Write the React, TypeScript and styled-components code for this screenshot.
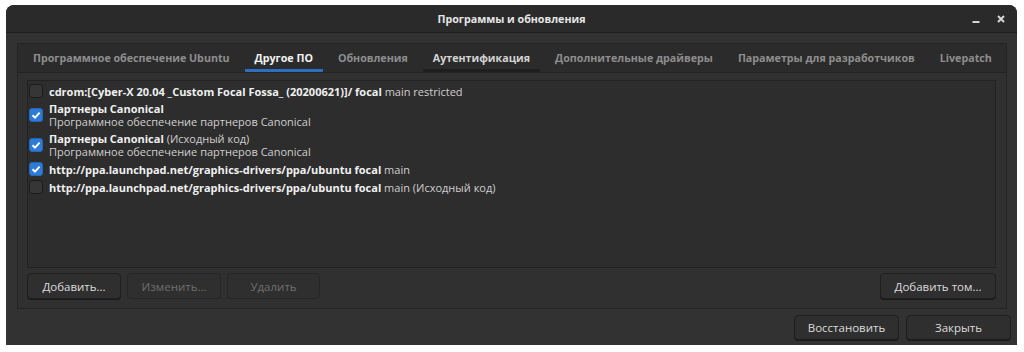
import React from 'react'
import styled, { createGlobalStyle } from 'styled-components'

const GlobalStyle = createGlobalStyle`
  html, body {
    margin: 0;
    padding: 0;
    background: #ffffff;
  }
  body {
    font-family: "Open Sans", "Noto Sans", "DejaVu Sans", sans-serif;
    font-size: 11px;
  }
`

type Source = {
  id: string
  title: string
  extra?: string
  subtitle?: string
  checked: boolean
}

const sources: Source[] = [
  {
    id: 'cdrom',
    title: 'cdrom:[Cyber-X 20.04 _Custom Focal Fossa_ (20200621)]/ focal',
    extra: ' main restricted',
    checked: false,
  },
  {
    id: 'partner',
    title: 'Партнеры Canonical',
    subtitle: 'Программное обеспечение партнеров Canonical',
    checked: true,
  },
  {
    id: 'partner-src',
    title: 'Партнеры Canonical',
    extra: ' (Исходный код)',
    subtitle: 'Программное обеспечение партнеров Canonical',
    checked: true,
  },
  {
    id: 'ppa',
    title: 'http://ppa.launchpad.net/graphics-drivers/ppa/ubuntu focal',
    extra: ' main',
    checked: true,
  },
  {
    id: 'ppa-src',
    title: 'http://ppa.launchpad.net/graphics-drivers/ppa/ubuntu focal',
    extra: ' main (Исходный код)',
    checked: false,
  },
]

const tabs = [
  'Программное обеспечение Ubuntu',
  'Другое ПО',
  'Обновления',
  'Аутентификация',
  'Дополнительные драйверы',
  'Параметры для разработчиков',
  'Livepatch',
]

export default function App() {
  return (
    <>
      <GlobalStyle />
      <Window>
        <TitleBar>
          <span />
          <Title>Программы и обновления</Title>
          <Controls>
            <ControlButton aria-label="minimize">
              <svg width="10" height="10" viewBox="0 0 10 10">
                <rect x="1.5" y="7" width="7" height="2" fill="#d6d6d6" />
              </svg>
            </ControlButton>
            <ControlButton aria-label="close">
              <svg width="10" height="10" viewBox="0 0 10 10">
                <path d="M2 2 L8 8 M8 2 L2 8" stroke="#d6d6d6" strokeWidth="2" />
              </svg>
            </ControlButton>
          </Controls>
        </TitleBar>

        <Body>
          <Notebook>
            <TabBar>
              {tabs.map((t, i) => (
                <Tab key={t} $active={i === 1} $hover={i === 3}>
                  {t}
                </Tab>
              ))}
            </TabBar>
            <Page>
              <SourceList>
                {sources.map(s => (
                  <Row key={s.id} $tall={!!s.subtitle}>
                    <Check $checked={s.checked}>
                      {s.checked && (
                        <svg width="10" height="10" viewBox="0 0 10 10">
                          <path
                            d="M1.5 5.2 L4 7.6 L8.6 2.6"
                            fill="none"
                            stroke="#fff"
                            strokeWidth="1.9"
                          />
                        </svg>
                      )}
                    </Check>
                    <Label>
                      <Line>
                        <b>{s.title}</b>
                        {s.extra}
                      </Line>
                      {s.subtitle && <Line>{s.subtitle}</Line>}
                    </Label>
                  </Row>
                ))}
              </SourceList>
              <PageActions>
                <ButtonGroup>
                  <Button $w={94}>Добавить...</Button>
                  <Button $w={94} disabled>
                    Изменить...
                  </Button>
                  <Button $w={93} disabled>
                    Удалить
                  </Button>
                </ButtonGroup>
                <Button $w={116}>Добавить том...</Button>
              </PageActions>
            </Page>
          </Notebook>
          <Footer>
            <Button $w={105} $h={25}>
              Восстановить
            </Button>
            <Button $w={105} $h={25}>
              Закрыть
            </Button>
          </Footer>
        </Body>
      </Window>
    </>
  )
}

const Window = styled.div`
  margin: 5px 0 0 6px;
  width: 1011px;
  height: 340px;
  background: #323232;
  border-radius: 8px 8px 0 0;
  display: flex;
  flex-direction: column;
  color: #dedede;
  overflow: hidden;
`

const TitleBar = styled.div`
  height: 27px;
  flex: none;
  display: grid;
  grid-template-columns: 1fr auto 1fr;
  align-items: center;
  background: #2a2a2a;
  border-bottom: 1px solid #1e1e1e;
`

const Title = styled.div`
  font-weight: 700;
  font-size: 10.7px;
  color: #e6e6e6;
`

const Controls = styled.div`
  display: flex;
  justify-content: flex-end;
  gap: 5px;
  padding-right: 6px;
`

const ControlButton = styled.div`
  width: 20px;
  height: 20px;
  display: flex;
  align-items: center;
  justify-content: center;
`

const Body = styled.div`
  flex: 1;
  display: flex;
  flex-direction: column;
  padding: 10px 6px 0 11px;
`

const Notebook = styled.div`
  width: 990px;
  height: 266px;
  display: flex;
  flex-direction: column;
  border: 1px solid #242424;
  box-sizing: border-box;
`

const TabBar = styled.div`
  height: 29px;
  flex: none;
  display: flex;
  background: #2b2b2b;
  border-bottom: 1px solid #242424;
  box-sizing: border-box;
  padding-left: 5px;
  gap: 5px;
  overflow: hidden;
`

const Tab = styled.div<{ $active?: boolean; $hover?: boolean }>`
  flex: none;
  padding: 3px 10px 0;
  display: flex;
  align-items: center;
  justify-content: center;
  font-weight: 700;
  font-size: 10.7px;
  color: ${p => (p.$active ? '#f2f2f2' : p.$hover ? '#d4d4d4' : '#8e8e8e')};
  border-bottom: 3px solid
    ${p => (p.$active ? '#2c6ec0' : p.$hover ? '#1f1f1f' : 'transparent')};
  box-sizing: border-box;
  white-space: nowrap;
`

const Page = styled.div`
  flex: 1;
  display: flex;
  flex-direction: column;
  padding: 7px 10px 9px 9px;
  background: #303030;
`

const SourceList = styled.div`
  flex: 1;
  background: #2d2d2d;
  border: 1px solid #222;
  padding: 1px 0 0 1px;
`

const Row = styled.div<{ $tall?: boolean }>`
  display: flex;
  align-items: center;
  gap: 6px;
  height: ${p => (p.$tall ? 30 : 18)}px;
`

const Check = styled.div<{ $checked?: boolean }>`
  width: 14px;
  height: 14px;
  box-sizing: border-box;
  border-radius: 3px;
  flex: none;
  display: flex;
  align-items: center;
  justify-content: center;
  background: ${p => (p.$checked ? '#2e7bd6' : '#363636')};
  border: 1px solid ${p => (p.$checked ? '#2566b5' : '#1b1b1b')};
`

const Label = styled.div`
  display: flex;
  flex-direction: column;
`

const Line = styled.div`
  line-height: 13px;
  font-size: 11px;
  color: #cfcfcf;
  white-space: nowrap;

  b {
    color: #f0f0f0;
    font-weight: 700;
  }
`

const PageActions = styled.div`
  flex: none;
  display: flex;
  justify-content: space-between;
  margin-top: 5px;
`

const ButtonGroup = styled.div`
  display: flex;
  gap: 6px;
`

const Button = styled.button<{ $w: number; $h?: number }>`
  width: ${p => p.$w}px;
  height: ${p => p.$h ?? 26}px;
  background: #2f2f2f;
  border: 1px solid #1f1f1f;
  border-radius: 4px;
  font-family: inherit;
  font-size: 11.5px;
  font-weight: 500;
  color: #dcdcdc;
  box-shadow: 0 1px 0 #1a1a1a;
  padding: 0;

  &:disabled {
    color: #6e6e6e;
    box-shadow: none;
    border-color: #262626;
  }
`

const Footer = styled.div`
  display: flex;
  justify-content: flex-end;
  gap: 7px;
  margin-top: 6px;
`
